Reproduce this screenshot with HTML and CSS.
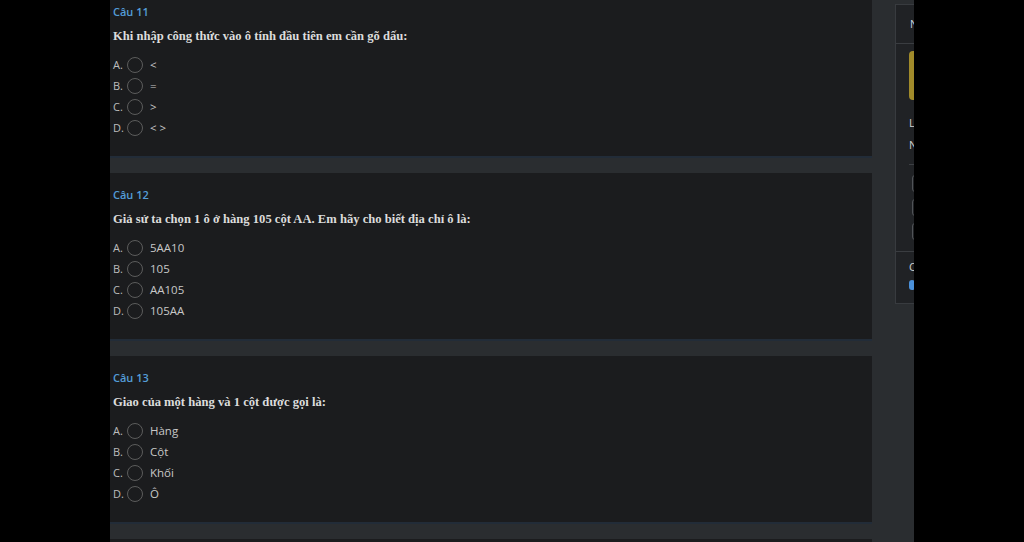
FILE: index.html
```html
<!DOCTYPE html>
<html lang="vi">
<head>
  <meta charset="UTF-8">
  <title>Bài kiểm tra</title>
  <link rel="stylesheet" href="styles.css">
</head>
<body>
  <div class="page">
    <div class="questions">
      <div class="card">
        <div class="q-num">Câu 11</div>
        <div class="q-text">Khi nhập công thức vào ô tính đầu tiên em cần gõ dấu:</div>
        <div class="option"><span class="opt-key">A.</span><span class="radio"></span><span class="opt-text">&lt;</span></div>
        <div class="option"><span class="opt-key">B.</span><span class="radio"></span><span class="opt-text">=</span></div>
        <div class="option"><span class="opt-key">C.</span><span class="radio"></span><span class="opt-text">&gt;</span></div>
        <div class="option"><span class="opt-key">D.</span><span class="radio"></span><span class="opt-text">&lt; &gt;</span></div>
      </div>

      <div class="card">
        <div class="q-num">Câu 12</div>
        <div class="q-text">Giả sử ta chọn 1 ô ở hàng 105 cột AA. Em hãy cho biết địa chỉ ô là:</div>
        <div class="option"><span class="opt-key">A.</span><span class="radio"></span><span class="opt-text">5AA10</span></div>
        <div class="option"><span class="opt-key">B.</span><span class="radio"></span><span class="opt-text">105</span></div>
        <div class="option"><span class="opt-key">C.</span><span class="radio"></span><span class="opt-text">AA105</span></div>
        <div class="option"><span class="opt-key">D.</span><span class="radio"></span><span class="opt-text">105AA</span></div>
      </div>

      <div class="card">
        <div class="q-num">Câu 13</div>
        <div class="q-text">Giao của một hàng và 1 cột được gọi là:</div>
        <div class="option"><span class="opt-key">A.</span><span class="radio"></span><span class="opt-text">Hàng</span></div>
        <div class="option"><span class="opt-key">B.</span><span class="radio"></span><span class="opt-text">Cột</span></div>
        <div class="option"><span class="opt-key">C.</span><span class="radio"></span><span class="opt-text">Khối</span></div>
        <div class="option"><span class="opt-key">D.</span><span class="radio"></span><span class="opt-text">Ô</span></div>
      </div>

      <div class="card"></div>
    </div>

    <aside class="sidebar">
      <div class="side-head">N</div>
      <div class="side-body">
        <button class="btn-submit" type="button"></button>
        <div class="side-line">L</div>
        <div class="side-line">N</div>
        <hr class="side-sep">
        <input class="side-input" type="text">
        <input class="side-input" type="text">
        <input class="side-input" type="text">
      </div>
      <div class="side-foot">
        <div class="side-line">C</div>
        <span class="dot"></span>
      </div>
    </aside>
  </div>
</body>
</html>
```

FILE: styles.css
```css
body {
  margin: 0;
  background: #000;
  height: 542px;
  overflow: hidden;
  font-family: 'Open Sans', sans-serif;
}

.page {
  margin-left: 110px;
  width: 804px;
  height: 542px;
  background: #2a2d30;
  display: flex;
  align-items: flex-start;
  overflow: hidden;
}

/* cot cau hoi */
.questions {
  width: 762px;
  flex-shrink: 0;
  margin-top: -10px;
  display: flex;
  flex-direction: column;
  gap: 15px;
}
.card {
  background: #1b1c1e;
  padding: 14px 3px 0;
  box-sizing: border-box;
  height: 168px;
  border-bottom: 2px solid #222c38;
}
.q-num {
  color: #549dd8;
  font-size: 11px;
  font-weight: 600;
  line-height: 16px;
}
.q-text {
  margin-top: 7px;
  font-family: 'Liberation Serif', serif;
  font-weight: bold;
  font-size: 12.6px;
  line-height: 18px;
  color: #dcdcdc;
}
.option {
  display: flex;
  align-items: center;
  height: 21px;
}
.q-text + .option {
  margin-top: 9px;
}
.opt-key {
  width: 14px;
  font-size: 11px;
  color: #bdbdbd;
}
.radio {
  width: 14px;
  height: 14px;
  border: 1px solid #5c5c5c;
  border-radius: 50%;
  margin-right: 7px;
}
.opt-text {
  font-size: 11.5px;
  color: #c8c8c8;
}

/* cot ben phai */
.sidebar {
  margin-left: 23px;
  margin-top: 4px;
  width: 250px;
  flex-shrink: 0;
  height: 298px;
  background: #202225;
  border: 1px solid #383b3f;
  color: #d0d0d0;
  font-size: 11px;
}
.side-head {
  height: 38px;
  line-height: 38px;
  padding-left: 14px;
  border-bottom: 1px solid #3a3d41;
  color: #c6d3e0;
}
.side-body {
  padding: 7px 13px 4px;
  border-bottom: 1px solid #3a3d41;
}
.btn-submit {
  display: block;
  width: 200px;
  height: 49px;
  background: #a08a2a;
  border: none;
  border-radius: 4px;
  margin-bottom: 12px;
}
.side-line {
  line-height: 22px;
}
.side-sep {
  border: none;
  border-top: 1px solid #3c3f43;
  margin: 8px 0 10px;
}
.side-input {
  display: block;
  width: 200px;
  height: 15px;
  margin: 0 3px 7px;
  padding: 0;
  background: transparent;
  border: 1px solid #505357;
  border-radius: 3px;
}
.side-foot {
  padding: 4px 13px;
}
.dot {
  display: inline-block;
  width: 6px;
  height: 10px;
  border-radius: 3px;
  background: #4a90d9;
}
```
